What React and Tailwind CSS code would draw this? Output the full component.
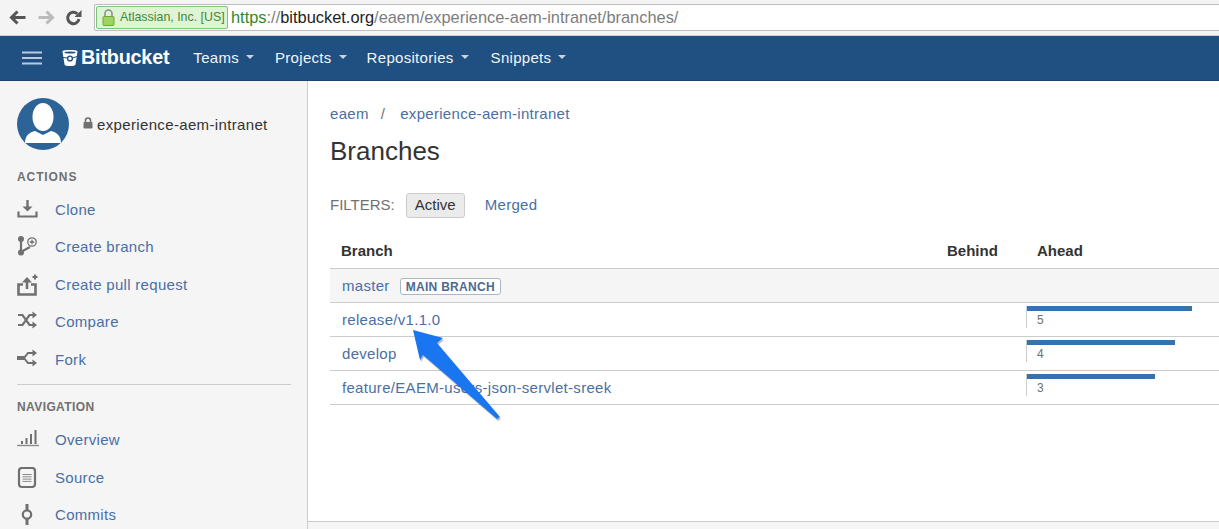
import React from "react";

const font = "font-['Liberation_Sans',Arial,sans-serif]";
const linkText = "text-[15px] tracking-[0.3px] text-[#4a6fa5]";

const Caret = () => (
  <span className="ml-[7px] inline-block w-0 h-0 border-x-[4px] border-x-transparent border-t-[4px] border-t-[#c5d3e2] relative top-[-1px]" />
);

const NavItem = ({ label, className }) => (
  <a className={`flex items-center text-[15px] tracking-[0.3px] text-[#f2f5f9] ${className}`}>
    {label}
    <Caret />
  </a>
);

const BrowserBar = () => (
  <div className="h-[36px] bg-[#f4f4f4] flex items-center border-b border-[#cfcfcf]">
    <svg width="17" height="15" viewBox="0 0 17 15" className="ml-[9px] shrink-0">
      <path d="M8.5 1.5 2.5 7.5 8.5 13.5M3 7.5h13.5" fill="none" stroke="#555" strokeWidth="3" />
    </svg>
    <svg width="17" height="15" viewBox="0 0 17 15" className="ml-[12px] shrink-0">
      <path d="M8.5 1.5 14.5 7.5 8.5 13.5M14 7.5H.5" fill="none" stroke="#bbb" strokeWidth="3" />
    </svg>
    <svg width="17" height="17" viewBox="0 0 17 17" className="ml-[10px] shrink-0">
      <path d="M14 10a5.7 5.7 0 1 1-1.7-5.2" fill="none" stroke="#555" strokeWidth="3" />
      <path d="M9.5 8H16.5V1z" fill="#555" />
    </svg>
    <div className="ml-[12px] flex-1 h-[27px] bg-white border border-[#bdbdbd] border-r-0 rounded-l-[2px] flex items-center pl-[1px]">
      <div className="h-[23px] w-[132px] shrink-0 bg-[#dff3d5] border border-[#7dc476] rounded-[2px] flex items-center pl-[5px]">
        <svg width="13" height="17" viewBox="0 0 13 17" className="shrink-0">
          <path d="M3 8V4.5a3.5 3.5 0 0 1 7 0V8" fill="none" stroke="#8f8f8f" strokeWidth="1.6" />
          <rect x="1" y="7.5" width="11" height="9" rx="1" fill="#9ed35f" stroke="#6ea83c" />
        </svg>
        <span className="ml-[5px] text-[12.4px] text-[#3f8a36] whitespace-nowrap">Atlassian, Inc. [US]</span>
      </div>
      <span className="ml-[3px] text-[16.4px] text-[#7d7d7d] whitespace-nowrap">
        <span className="text-[#2f8a2f]">https</span>://<span className="text-[#222]">bitbucket.org</span>/eaem/experience-aem-intranet/branches/
      </span>
    </div>
  </div>
);

const TopNav = () => (
  <div className="h-[45px] bg-[#205081] flex items-center border-b border-[#1b4570]">
    <svg width="20" height="14" viewBox="0 0 20 14" className="ml-[22px] shrink-0">
      <path d="M0 1.5h20M0 7h20M0 12.5h20" stroke="#b9cbdd" strokeWidth="2" />
    </svg>
    <svg width="16" height="18" viewBox="0 0 16 18" className="ml-[20px] shrink-0">
      <path d="M0.5 2.5C0.5 0.6 15.5 0.6 15.5 2.5L13.5 15.5C13.2 17.6 2.8 17.6 2.5 15.5Z" fill="#fff" />
      <ellipse cx="8" cy="3.5" rx="5.5" ry="1" fill="#205081" />
      <circle cx="8" cy="9.5" r="2.4" fill="none" stroke="#205081" strokeWidth="1.4" />
      <path d="M1 8.5 5.5 9M10.5 9 15 7.5" stroke="#205081" strokeWidth="1" />
    </svg>
    <span className="ml-[3px] text-[19.8px] font-bold text-white leading-none tracking-[-0.2px]">Bitbucket</span>
    <NavItem label="Teams" className="ml-[24px]" />
    <NavItem label="Projects" className="ml-[21px]" />
    <NavItem label="Repositories" className="ml-[20px]" />
    <NavItem label="Snippets" className="ml-[22px]" />
  </div>
);

const icons = {
  clone: (
    <>
      <path d="M10.5 1v9" stroke="#707070" strokeWidth="2.4" fill="none" />
      <path d="M5.5 7.5h10l-5 5z" fill="#707070" />
      <path d="M1.5 12.5v5h18v-5" stroke="#707070" strokeWidth="2.2" fill="none" />
    </>
  ),
  branch: (
    <>
      <path d="M4 3v13l9-5" stroke="#707070" strokeWidth="2.2" fill="none" />
      <circle cx="4" cy="3" r="3" fill="#707070" />
      <circle cx="4" cy="16.5" r="3" fill="#707070" />
      <circle cx="15" cy="6" r="4.2" fill="#f5f5f5" stroke="#707070" strokeWidth="1.3" />
      <path d="M12.8 6h4.4M15 3.8v4.4" stroke="#707070" strokeWidth="1.3" />
    </>
  ),
  pull: (
    <>
      <path d="M6 10.5H1.5v10h17v-10H14" stroke="#707070" strokeWidth="2.6" fill="none" />
      <path d="M10 15V7" stroke="#707070" strokeWidth="2.6" />
      <path d="M5 8.5 10 3l5 5.5z" fill="#707070" />
      <path d="M15.5 3h5M18 .5v5" stroke="#707070" strokeWidth="2" />
    </>
  ),
  compare: (
    <>
      <path d="M1 4h4.5l7 10H16M1 14h4.5l7-10H16" stroke="#707070" strokeWidth="2.2" fill="none" />
      <path d="M15.5 0.5 20 4l-4.5 3.5zM15.5 10.5 20 14l-4.5 3.5z" fill="#707070" />
    </>
  ),
  fork: (
    <>
      <path d="M0 9h7l4-5h5M7 9l4 5h5" stroke="#707070" strokeWidth="2" fill="none" />
      <path d="M0 7h8v4H0z" fill="#707070" />
      <path d="M15.5 .5 20 4l-4.5 3.5zM15.5 10.5 20 14l-4.5 3.5z" fill="#707070" />
    </>
  ),
  overview: (
    <>
      <path d="M0 16.5h22" stroke="#8a8a8a" strokeWidth="1.4" />
      <path d="M5 15v-3M9.5 15V9M14 15V5M18.5 15V1" stroke="#707070" strokeWidth="2" />
    </>
  ),
  source: (
    <>
      <rect x="2" y="1" width="16" height="19" rx="3" fill="none" stroke="#707070" strokeWidth="2.2" />
      <path d="M5.5 7.5h9M5.5 9.8h9M5.5 12.1h9M5.5 14.4h9" stroke="#8a8a8a" strokeWidth="1" />
    </>
  ),
  commits: (
    <>
      <path d="M10 0v6M10 15v6" stroke="#707070" strokeWidth="3" />
      <circle cx="10" cy="10.5" r="4.2" fill="none" stroke="#707070" strokeWidth="2.2" />
    </>
  ),
};

const SideItem = ({ icon, label }) => (
  <a className="h-[37.5px] flex items-center">
    <svg width="23" height="22" viewBox="0 0 23 22" className="shrink-0">
      {icons[icon]}
    </svg>
    <span className={`ml-[15px] ${linkText}`}>{label}</span>
  </a>
);

const SideHeading = ({ children, className }) => (
  <h5 className={`text-[12px] font-bold text-[#707070] ${className}`}>{children}</h5>
);

const Sidebar = () => (
  <aside className="w-[308px] shrink-0 bg-[#f5f5f5] border-r border-[#cccccc] pl-[17px] pr-[16px] pt-[17px] overflow-hidden">
    <div className="flex items-center">
      <svg width="52" height="52" viewBox="0 0 52 52" className="shrink-0">
        <circle cx="26" cy="26" r="26" fill="#2d6498" />
        <ellipse cx="26" cy="19" rx="10.5" ry="14" fill="#fff" />
        <path d="M8 45c0-8 5-11 10-12l8 4 8-4c5 1 10 4 10 12z" fill="#fff" />
      </svg>
      <svg width="10" height="12" viewBox="0 0 10 12" className="ml-[14px] mb-[3px] shrink-0">
        <path d="M2.5 5V3.5a2.5 2.5 0 0 1 5 0V5" fill="none" stroke="#707070" strokeWidth="1.6" />
        <rect x="0.5" y="5" width="9" height="6.5" rx="1" fill="#707070" />
      </svg>
      <span className="ml-[4px] pt-[2px] text-[15px] tracking-[0.35px] text-[#333]">experience-aem-intranet</span>
    </div>
    <SideHeading className="mt-[18px] tracking-[0.9px]">ACTIONS</SideHeading>
    <div className="mt-[5px] flex flex-col">
      <SideItem icon="clone" label="Clone" />
      <SideItem icon="branch" label="Create branch" />
      <SideItem icon="pull" label="Create pull request" />
      <SideItem icon="compare" label="Compare" />
      <SideItem icon="fork" label="Fork" />
    </div>
    <div className="mt-[5px] border-t border-[#cccccc]" />
    <SideHeading className="mt-[13px] tracking-[0.4px]">NAVIGATION</SideHeading>
    <div className="mt-[6px] flex flex-col">
      <SideItem icon="overview" label="Overview" />
      <SideItem icon="source" label="Source" />
      <SideItem icon="commits" label="Commits" />
    </div>
  </aside>
);

const BranchRow = ({ name, bar, ahead, badge, shaded }) => (
  <div className={`h-[34px] border-b border-[#cccccc] flex items-center ${shaded ? "bg-[#f5f5f5]" : ""}`}>
    <div className="w-[696px] pl-[12px] pt-[3px] flex items-center">
      <a className={linkText}>{name}</a>
      {badge && (
        <span className="ml-[10px] h-[17px] px-[5px] flex items-center rounded-[3px] border border-[#a9b7c9] bg-white text-[12px] tracking-[0.3px] font-bold text-[#4d6a8f]">
          {badge}
        </span>
      )}
    </div>
    {bar && (
      <div className="h-[22px] w-[193px] border-l border-[#cccccc] self-start mt-[3px]">
        <div className="h-[5px] bg-[#3572b0]" style={{ width: bar }} />
        <div className="pl-[10px] text-[12px] text-[#707070]">{ahead}</div>
      </div>
    )}
  </div>
);

const Main = () => (
  <main className="relative flex-1 flex flex-col pl-[22px]">
    <div className={`flex items-center mt-[22px] ${linkText}`}>
      <a>eaem</a>
      <span className="ml-[12px] text-[#707070]">/</span>
      <a className="ml-[15px]">experience-aem-intranet</a>
    </div>
    <h1 className="mt-[10px] text-[26px] leading-[30px] text-[#333]">Branches</h1>
    <div className="mt-[27px] flex items-center">
      <span className="text-[15px] text-[#707070]">FILTERS:</span>
      <span className="ml-[11px] h-[25px] w-[59px] flex items-center justify-center rounded-[3px] border border-[#cccccc] bg-[#ebebeb] text-[15px] text-[#333]">Active</span>
      <a className={`ml-[20px] ${linkText}`}>Merged</a>
    </div>
    <div className="mt-[17px] h-[34px] flex items-center border-b border-[#cccccc] text-[15px] font-bold text-[#333]">
      <span className="w-[617px] pl-[11px]">Branch</span>
      <span className="w-[90px]">Behind</span>
      <span>Ahead</span>
    </div>
    <BranchRow name="master" badge="MAIN BRANCH" shaded />
    <BranchRow name="release/v1.1.0" bar={165} ahead="5" />
    <BranchRow name="develop" bar={148} ahead="4" />
    <BranchRow name="feature/EAEM-users-json-servlet-sreek" bar={128} ahead="3" />
    <div className="mt-auto h-[8px] border-t border-[#cccccc] bg-[#f5f5f5] -ml-[22px]" />
    {/* annotation arrow over the table */}
    <svg width="100" height="100" viewBox="0 0 100 100" className="absolute left-[100px] top-[248px]">
      <polygon points="5,1 35,9 29,14 92,88 89,90 15,26 12,31" fill="#000" opacity="0.25" transform="translate(1 2)" />
      <polygon points="5,1 35,9 29,14 92,88 89,90 15,26 12,31" fill="#1a75f0" />
    </svg>
  </main>
);

export default function App() {
  return (
    <div className={`${font} w-[1219px] h-[529px] overflow-hidden flex flex-col bg-white`}>
      <BrowserBar />
      <TopNav />
      <div className="flex-1 flex min-h-0">
        <Sidebar />
        <Main />
      </div>
    </div>
  );
}
